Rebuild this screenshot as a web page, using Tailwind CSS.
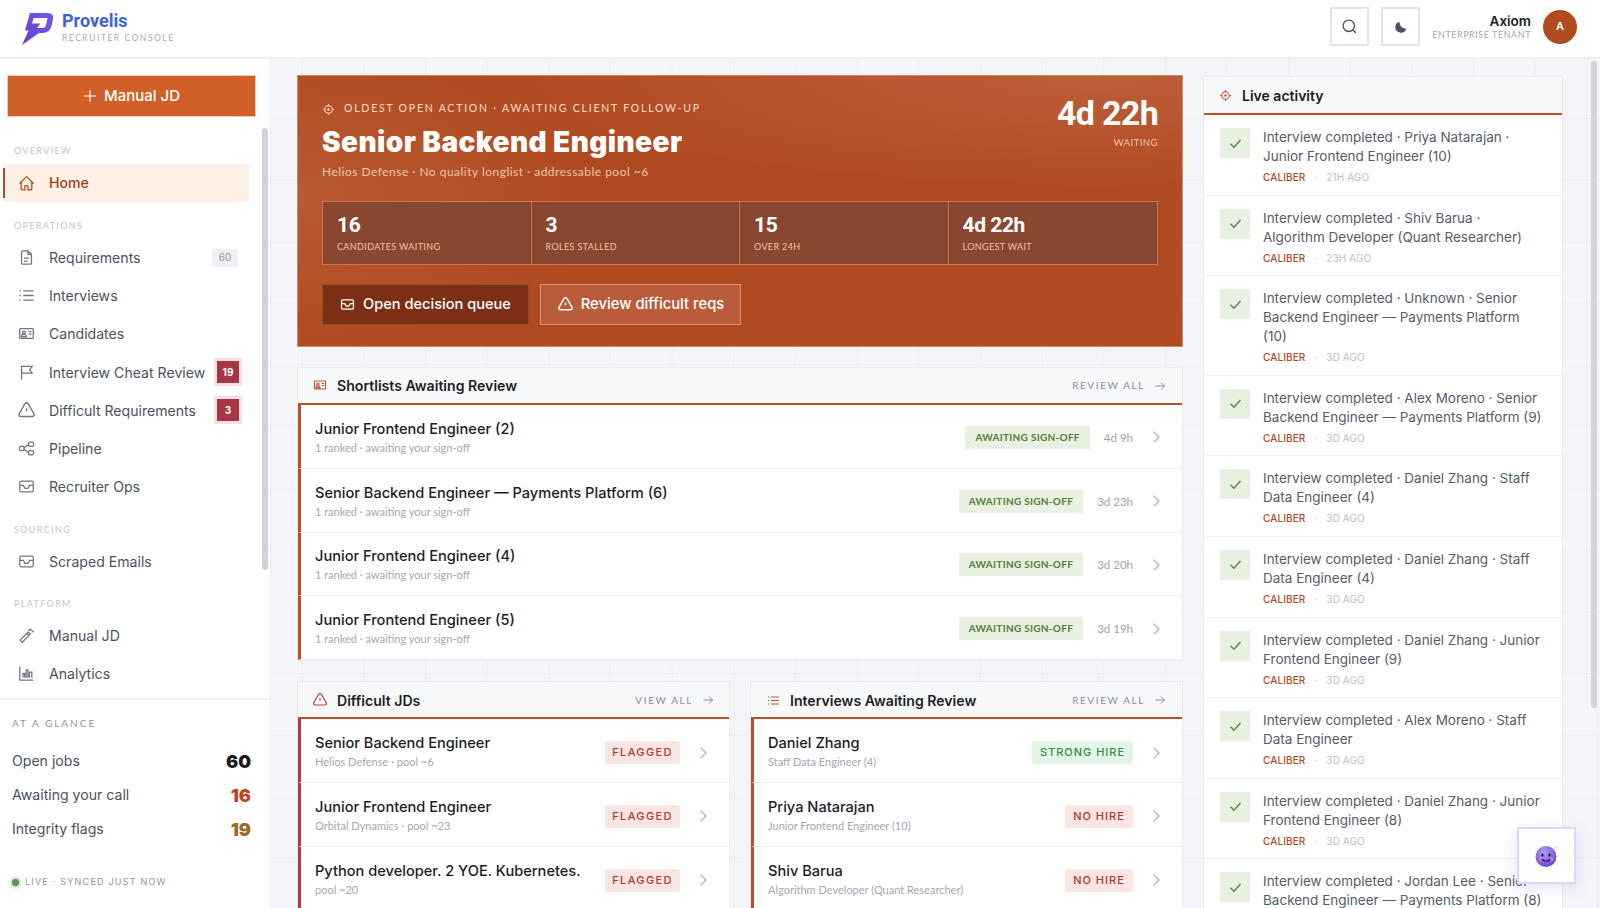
<!DOCTYPE html>
<html lang="en">
<head>
  <meta charset="UTF-8">
  <title>Provelis Recruiter Console</title>
  <script src="https://cdn.jsdelivr.net/npm/@tailwindcss/browser@4"></script>
</head>
<body class="h-[908px] overflow-hidden bg-[#f4f5f8] font-['Inter',sans-serif] text-[#1c1e24]">

  <!-- icon sprite -->
  <svg class="hidden">
    <defs>
      <symbol id="i-home" viewBox="0 0 24 24"><path d="m2.25 12 8.954-8.955c.44-.439 1.152-.439 1.591 0L21.75 12M4.5 9.75v10.125c0 .621.504 1.125 1.125 1.125H9.75v-4.875c0-.621.504-1.125 1.125-1.125h2.25c.621 0 1.125.504 1.125 1.125V21h4.125c.621 0 1.125-.504 1.125-1.125V9.75"/></symbol>
      <symbol id="i-doc" viewBox="0 0 24 24"><path d="M14 2.5H6.5A1.5 1.5 0 0 0 5 4v16a1.5 1.5 0 0 0 1.5 1.5h11A1.5 1.5 0 0 0 19 20V7.5zM14 2.5v5h5M8.5 13h7M8.5 17h5"/></symbol>
      <symbol id="i-list" viewBox="0 0 24 24"><path d="M7.5 5.5h14.500M7.5 12h14.500M7.5 18.5h14.500M2 5.5h2M2 12h2M2 18.5h2"/></symbol>
      <symbol id="i-id" viewBox="0 0 24 24"><path d="M15 9.5h4M15 13h4M3.5 5h17a1 1 0 0 1 1 1v12a1 1 0 0 1-1 1h-17a1 1 0 0 1-1-1V6a1 1 0 0 1 1-1Zm7 5.500a2 2 0 1 1-4 0 2 2 0 0 1 4 0ZM5 16.500a3.500 3.500 0 0 1 7 0Z"/></symbol>
      <symbol id="i-flag" viewBox="0 0 24 24"><path d="M5 22V3.500h15l-3.500 4.500 3.500 5H5"/></symbol>
      <symbol id="i-warn" viewBox="0 0 24 24"><path d="M12 9v4m-9.303 3.126c-.866 1.5.217 3.374 1.948 3.374h14.71c1.73 0 2.813-1.874 1.948-3.374L13.949 3.378c-.866-1.5-3.032-1.5-3.898 0L2.697 16.126ZM12 16.25h.01"/></symbol>
      <symbol id="i-pipe" viewBox="0 0 24 24"><rect x="2" y="9" width="6.500" height="6" rx="1.500"/><rect x="15" y="3" width="7" height="6" rx="1.500"/><rect x="15" y="15" width="7" height="6" rx="1.500"/><path d="M8.500 11 15 6.500M8.500 13l6.500 4.500"/></symbol>
      <symbol id="i-inbox" viewBox="0 0 24 24"><path d="M4.500 4.500h15a2 2 0 0 1 2 2v11a2 2 0 0 1-2 2h-15a2 2 0 0 1-2-2v-11a2 2 0 0 1 2-2ZM2.500 10.500h5l2.500 4h4l2.500-4h5"/></symbol>
      <symbol id="i-wand" viewBox="0 0 24 24"><path d="M3 18.500 14.500 7l3 3L6 21.500ZM12.500 9l3 3M17 2v3.500M14.500 4h5M19.500 7.500 22 5"/></symbol>
      <symbol id="i-chart" viewBox="0 0 24 24"><path d="M2.500 2.500v19h19M7 18v-6h2.500v6M11.500 18V7H14v11M16 18v-8h3.500v8"/></symbol>
      <symbol id="i-target" viewBox="0 0 24 24"><circle cx="12" cy="12" r="7"/><path d="M12 2v3M12 19v3M2 12h3M19 12h3"/><circle cx="12" cy="12" r="1.200" fill="currentColor"/></symbol>
      <symbol id="i-arrow" viewBox="0 0 24 24"><path d="M3 12h18M14 5l7 7-7 7"/></symbol>
      <symbol id="i-chev" viewBox="0 0 24 24"><path d="m8.500 4 8 8-8 8"/></symbol>
      <symbol id="i-check" viewBox="0 0 24 24"><path d="m4 12.500 5.500 5.500L20 6.500"/></symbol>
    </defs>
  </svg>

  <header class="h-[59px] flex items-center justify-between bg-white border-b-2 border-[#eceef2]">
    <div class="flex items-center pl-[22px]">
      <svg class="w-[32px] h-[32px]" viewBox="0 0 32 32">
        <defs><linearGradient id="logo-g" x1="0" y1="1" x2="1" y2="0"><stop offset="0" stop-color="#6a3cd2"/><stop offset="1" stop-color="#7459ea"/></linearGradient></defs>
        <path fill="url(#logo-g)" fill-rule="evenodd" d="M8 0H26Q32 0 31 6L29.500 13Q28 20 20 20H17L0 32 6.500 17.500H3ZM11.500 5H25.500L24 12.500Q23.500 15 20.500 15H15L18.500 10.500H10Z"/>
      </svg>
      <div class="ml-[8px] pb-[3px]">
        <div class="text-[18px] leading-[20px] font-bold text-[#3b63e0] font-['Roboto',sans-serif]">Provelis</div>
        <div class="mt-[1px] text-[8.5px] leading-[12px] tracking-[0.18em] text-[#a3a9b8] font-['Lato',sans-serif]">RECRUITER CONSOLE</div>
      </div>
    </div>
    <div class="flex items-center pr-[23px] pb-[4px]">
      <button class="w-[39px] h-[39px] flex items-center justify-center border-2 border-[#e2e5ec] text-[#4b5262]">
        <svg class="w-[17px] h-[17px]" viewBox="0 0 24 24" fill="none" stroke="currentColor" stroke-width="2"><circle cx="11" cy="11" r="8"/><path d="m21 21-4.300-4.300"/></svg>
      </button>
      <button class="ml-[12px] w-[39px] h-[39px] flex items-center justify-center border-2 border-[#e2e5ec] text-[#4b5262]">
        <svg class="w-[14px] h-[14px]" viewBox="0 0 24 24" fill="currentColor"><path d="M21 14.500A10 10 0 0 1 9.500 3a9.500 9.500 0 1 0 11.500 11.500Z"/></svg>
      </button>
      <div class="ml-[12px] w-[99px] text-right">
        <div class="text-[13.5px] leading-[17px] font-semibold text-[#1c1e24]">Axiom</div>
        <div class="-mt-px text-[9px] leading-[12px] tracking-[0.06em] whitespace-nowrap text-[#a3a9b8] font-['Lato',sans-serif]">ENTERPRISE TENANT</div>
      </div>
      <div class="ml-[12px] w-[34px] h-[34px] rounded-full bg-[#b04a20] flex items-center justify-center text-white text-[11px] font-semibold">A</div>
    </div>
  </header>

  <div class="flex h-[849px]">
    <aside class="relative w-[271px] shrink-0 flex flex-col bg-white border-r border-[#eceef2]">
      <div class="px-[7px] pt-[16px]">
        <button class="w-[249px] h-[42px] flex items-center justify-center gap-[7px] bg-[#d16028] border border-[#f0c9b2] text-white text-[15px] font-medium">
          <svg class="w-[14px] h-[14px]" viewBox="0 0 24 24" fill="none" stroke="currentColor" stroke-width="2"><path d="M12 2v20M2 12h20"/></svg>
          Manual JD
        </button>
      </div>
      <nav id="nav" class="flex-1 pl-[3px] w-[249px]"></nav>
      <div class="h-[210px] border-t-2 border-[#eceef2] pl-[12px] pr-[19px] pt-[16px]">
        <div class="text-[10px] leading-[14px] tracking-[0.2em] text-[#8f94a3] font-['Lato',sans-serif]">AT A GLANCE</div>
        <div class="mt-[14px] flex items-center justify-between h-[34px] text-[14.1px] text-[#4b5262]"><span>Open jobs</span><span class="text-[18px] font-black text-[#17181c]">60</span></div>
        <div class="flex items-center justify-between h-[34px] text-[14.1px] text-[#4b5262]"><span>Awaiting your call</span><span class="text-[18px] font-black text-[#b8471f]">16</span></div>
        <div class="flex items-center justify-between h-[34px] text-[14.1px] text-[#4b5262]"><span>Integrity flags</span><span class="text-[18px] font-black text-[#9a6a1e]">19</span></div>
        <div class="mt-[29px] flex items-center gap-[6px] text-[9px] leading-[14px] tracking-[0.135em] text-[#8f94a3]">
          <span class="w-[7px] h-[7px] rounded-full bg-[#5f9450] shadow-[0_0_4px_#5f9450]"></span>
          LIVE · SYNCED JUST NOW
        </div>
      </div>
      <!-- sidebar scrollbar -->
      <div class="absolute left-[262px] top-[69px] w-[6px] h-[442px] rounded-full bg-[#d1d5db]"></div>
    </aside>

    <main class="relative flex-1 overflow-hidden pl-[26px] pt-[16px] flex gap-[20px] items-start bg-[#f4f5f8] bg-[linear-gradient(#eceef2_1px,transparent_1px),linear-gradient(90deg,#eceef2_1px,transparent_1px)] bg-[size:61.67px_61.67px] bg-[position:30.67px_-2.5px]">
      <div class="w-[886px] shrink-0">
        <section class="h-[272px] px-[24px] pt-[26px] border border-[#cf8a6a] bg-[#b04a20] bg-[radial-gradient(ellipse_70%_45%_at_90%_0%,#bd5e3a_0%,transparent_100%),radial-gradient(ellipse_35%_60%_at_0%_45%,#b95a30_0%,transparent_100%)] text-white">
          <div class="flex justify-between">
            <div>
              <div class="flex items-center h-[14px] text-[10.5px] tracking-[0.17em] text-[#f6dccd] font-['Lato',sans-serif]">
                <svg class="w-[13px] h-[13px] mr-[9px]" fill="none" stroke="currentColor" stroke-width="2"><use href="#i-target"/></svg>
                OLDEST OPEN ACTION · AWAITING CLIENT FOLLOW-UP
              </div>
              <h1 class="mt-[9px] text-[28px] leading-[34px] font-black tracking-[0.015em]">Senior Backend Engineer</h1>
              <p class="mt-[5px] text-[12px] leading-[16px] tracking-[0.04em] text-[#ecc4ae] font-['Lato',sans-serif]">Helios Defense · No quality longlist · addressable pool ~6</p>
            </div>
            <div class="text-right">
              <div class="-mt-[9px] text-[34px] leading-[40px] font-bold tracking-[-0.02em] font-['Roboto',sans-serif]">4d 22h</div>
              <div class="mt-[3px] text-[9.5px] leading-[14px] tracking-[0.05em] text-[#ecc4ae] font-['Lato',sans-serif]">WAITING</div>
            </div>
          </div>
          <div id="stats" class="mt-[21px] h-[64px] grid grid-cols-4 border border-[#c9755a] bg-[#88472e] divide-x divide-[#c9755a]"></div>
          <div class="mt-[19px] flex gap-[11px]">
            <button class="h-[41px] w-[207px] flex items-center justify-center gap-[8px] bg-[#7b2f14] border border-[#8f4c30] text-[14.6px] font-medium">
              <svg class="w-[15px] h-[15px]" fill="none" stroke="currentColor" stroke-width="2"><use href="#i-inbox"/></svg>
              Open decision queue
            </button>
            <button class="h-[41px] w-[201px] flex items-center justify-center gap-[7px] bg-[#b85c3c] border border-[#d69578] text-[14.8px] font-medium">
              <svg class="w-[17px] h-[17px]" fill="none" stroke="currentColor" stroke-width="2"><use href="#i-warn"/></svg>
              Review difficult reqs
            </button>
          </div>
        </section>

        <section class="mt-[20px] bg-white border border-[#e8eaef]">
          <div class="h-[37px] flex items-center justify-between pl-[15px] pr-[16px] bg-[#f7f8fa] border-b-2 border-[#bf4f27]">
            <div class="flex items-center gap-[10px] text-[14.1px] font-semibold"><svg class="w-[14px] h-[14px] text-[#bf4f27]" fill="none" stroke="currentColor" stroke-width="1.800"><use href="#i-id"/></svg>Shortlists Awaiting Review</div>
            <div class="flex items-center gap-[9px] text-[10px] tracking-[0.16em] text-[#8a8f9e] font-['Lato',sans-serif]">REVIEW ALL<svg class="w-[12px] h-[12px]" fill="none" stroke="currentColor" stroke-width="2"><use href="#i-arrow"/></svg></div>
          </div>
          <div id="shortlists"></div>
        </section>

        <div class="mt-[20px] grid grid-cols-2 gap-[20px]">
          <section class="bg-white border border-[#e8eaef]">
            <div class="h-[37px] pt-px flex items-center justify-between pl-[14px] pr-[15px] bg-[#f7f8fa] border-b-2 border-[#bf4f27]">
              <div class="flex items-center gap-[9px] text-[14.1px] font-semibold"><svg class="w-[16px] h-[16px] text-[#b03a48]" fill="none" stroke="currentColor" stroke-width="1.800"><use href="#i-warn"/></svg>Difficult JDs</div>
              <div class="flex items-center gap-[9px] text-[10px] tracking-[0.16em] text-[#8a8f9e] font-['Lato',sans-serif]">VIEW ALL<svg class="w-[12px] h-[12px]" fill="none" stroke="currentColor" stroke-width="2"><use href="#i-arrow"/></svg></div>
            </div>
            <div id="difficult"></div>
          </section>
          <section class="bg-white border border-[#e8eaef]">
            <div class="h-[37px] pt-px flex items-center justify-between px-[16px] bg-[#f7f8fa] border-b-2 border-[#bf4f27]">
              <div class="flex items-center gap-[10px] text-[14.1px] font-semibold"><svg class="w-[13px] h-[13px] text-[#bf4f27]" fill="none" stroke="currentColor" stroke-width="2"><use href="#i-list"/></svg>Interviews Awaiting Review</div>
              <div class="flex items-center gap-[9px] text-[10px] tracking-[0.16em] text-[#8a8f9e] font-['Lato',sans-serif]">REVIEW ALL<svg class="w-[12px] h-[12px]" fill="none" stroke="currentColor" stroke-width="2"><use href="#i-arrow"/></svg></div>
            </div>
            <div id="interviews"></div>
          </section>
        </div>
      </div>

      <section class="mt-px w-[360px] shrink-0 bg-white border border-[#e8eaef]">
        <div class="h-[36px] flex items-center gap-[10px] px-[15px] bg-[#f7f8fa] border-b-2 border-[#bf4f27] text-[14px] font-semibold box-content">
          <svg class="w-[13px] h-[13px] text-[#bf4f27]" fill="none" stroke="currentColor" stroke-width="2"><use href="#i-target"/></svg>Live activity
        </div>
        <div id="activity"></div>
      </section>

      <!-- main scrollbar -->
      <div class="absolute right-[3px] top-[2px] w-[6px] h-[647px] rounded-full bg-[#d1d5db]"></div>
    </main>
  </div>

  <!-- assistant launcher -->
  <button class="fixed left-[1517px] top-[827px] w-[59px] h-[57px] flex items-center justify-center bg-white border-2 border-[#dcd8fb] shadow-[0_4px_16px_rgba(90,70,200,0.15)]">
    <svg class="w-[30px] h-[30px]" viewBox="0 0 30 30">
      <defs><radialGradient id="face-g" cx="0.4" cy="0.3" r="0.8"><stop offset="0" stop-color="#b29cf5"/><stop offset="1" stop-color="#5f3fc4"/></radialGradient></defs>
      <circle cx="14" cy="15.500" r="10.500" fill="url(#face-g)"/>
      <circle cx="9" cy="18" r="2" fill="#d58fd8" opacity="0.7"/><circle cx="19.500" cy="18" r="2" fill="#d58fd8" opacity="0.7"/>
      <ellipse cx="10.500" cy="14" rx="1.100" ry="1.600" fill="#21124f"/><ellipse cx="17.500" cy="14" rx="1.100" ry="1.600" fill="#21124f"/>
      <path d="M10 18.500q4 3.500 8 0" fill="none" stroke="#21124f" stroke-width="1.200" stroke-linecap="round"/>
      <circle cx="24.500" cy="6.500" r="1.300" fill="#cfe0ff"/>
    </svg>
  </button>

  <script>
    const icon = (name, cls) => `<svg class="${cls}" fill="none" stroke="currentColor" stroke-width="1.800"><use href="#i-${name}"/></svg>`;

    // sidebar nav
    const navLabel = (t, cls) => `<div class="ml-[11px] ${cls} h-[14px] text-[9px] leading-[14px] tracking-[0.15em] text-[#c0c4ce] font-['Lato',sans-serif]">${t}</div>`;
    const navRow = (ic, t, extra = '', iconCls = 'w-[17px] h-[17px] mr-[14px]') => `<a class="h-[38.2px] flex items-center pl-[15px] pr-[10px] text-[14.1px] text-[#4b5262]">${icon(ic, iconCls + ' shrink-0 text-[#6f7686]')}<span class="flex-1 whitespace-nowrap">${t}</span>${extra}</a>`;
    const redBadge = t => `<span class="w-[22px] h-[22px] flex items-center justify-center bg-[#a63644] ring-3 ring-[#f6e0e3] text-white text-[10px] font-bold">${t}</span>`;
    document.getElementById('nav').innerHTML =
      navLabel('OVERVIEW', 'mt-[27px] mb-[6px]') +
      `<a class="relative h-[38px] flex items-center pl-[15px] bg-[#fdf0e7] text-[14.1px] font-medium text-[#a03f1c]"><span class="absolute left-0 top-[4px] bottom-[4px] w-[2px] bg-[#b04a20]"></span>${icon('home', 'w-[17px] h-[17px] mr-[14px] text-[#b04a20]')}Home</a>` +
      navLabel('OPERATIONS', 'mt-[17px] mb-[5.5px]') +
      navRow('doc', 'Requirements', `<span class="w-[26px] h-[18px] mr-px flex items-center justify-center bg-[#eef0f4] text-[#8f94a3] text-[10px]">60</span>`) +
      navRow('list', 'Interviews') +
      navRow('id', 'Candidates') +
      navRow('flag', 'Interview Cheat Review', redBadge('19')) +
      navRow('warn', 'Difficult Requirements', redBadge('3'), 'w-[19px] h-[19px] -ml-px mr-[13px]') +
      navRow('pipe', 'Pipeline') +
      navRow('inbox', 'Recruiter Ops') +
      navLabel('SOURCING', 'mt-[17.5px] mb-[5px]') +
      navRow('inbox', 'Scraped Emails') +
      navLabel('PLATFORM', 'mt-[16px] mb-[6px]') +
      navRow('wand', 'Manual JD') +
      navRow('chart', 'Analytics');

    // hero stats
    const stats = [['16', 'CANDIDATES WAITING'], ['3', 'ROLES STALLED'], ['15', 'OVER 24H'], ['4d 22h', 'LONGEST WAIT']];
    document.getElementById('stats').innerHTML = stats.map(s => `
      <div class="pl-[14px] pt-[11px]">
        <div class="text-[21px] leading-[24px] font-bold tracking-[-0.02em] font-['Roboto',sans-serif]">${s[0]}</div>
        <div class="mt-[3px] text-[9px] leading-[14px] tracking-[0.04em] text-[#ecc4ae] font-['Lato',sans-serif]">${s[1]}</div>
      </div>`).join('');

    // list rows; bottom cards sit their pill and chevron a pixel lower
    const row = (bar, title, sub, pill, time, chevCls = '') => `
      <div class="h-[63.8px] pt-[2px] flex items-center pr-[18px] border-l-3 ${bar} border-b border-b-[#eef0f3]">
        <div class="flex-1 pl-[14px] min-w-0">
          <div class="text-[14.6px] leading-[20px] font-medium whitespace-nowrap">${title}</div>
          <div class="mt-[1px] text-[11px] leading-[16px] text-[#a3a8b5] whitespace-nowrap font-['Lato',sans-serif]">${sub}</div>
        </div>
        ${pill}
        ${time ? `<span class="ml-[14px] text-[11.5px] tabular-nums text-[#9ea3b0] font-['Lato',sans-serif]">${time}</span>` : ''}
        ${icon('chev', 'w-[16px] h-[16px] ml-[15px] text-[#a9aebb] ' + chevCls)}
      </div>`;
    const signOff = `<span class="h-[23px] px-[10px] flex items-center bg-[#e8f0e2] text-[#4f7f3a] text-[10px] font-bold tracking-[0.03em] font-['Lato',sans-serif]">AWAITING SIGN-OFF</span>`;
    const flagged = `<span class="mt-[2px] w-[75px] h-[23px] flex items-center justify-center rounded-[3px] bg-[#fbe5e3] text-[#b3342f] text-[11px] font-medium tracking-[0.12em]">FLAGGED</span>`;
    const strong = `<span class="mt-[2px] w-[101px] h-[23px] flex items-center justify-center rounded-[3px] bg-[#e3f6e6] text-[#3b8552] text-[11px] font-medium tracking-[0.09em]">STRONG HIRE</span>`;
    const noHire = `<span class="mt-[2px] w-[68px] h-[23px] flex items-center justify-center rounded-[3px] bg-[#fbe5e3] text-[#b3342f] text-[11px] font-medium tracking-[0.09em]">NO HIRE</span>`;

    document.getElementById('shortlists').innerHTML = [
      ['Junior Frontend Engineer (2)', '4d 9h'],
      ['Senior Backend Engineer — Payments Platform (6)', '3d 23h'],
      ['Junior Frontend Engineer (4)', '3d 20h'],
      ['Junior Frontend Engineer (5)', '3d 19h'],
    ].map(r => row('border-l-[#bf4f27]', r[0], '1 ranked · awaiting your sign-off', signOff, r[1])).join('');

    document.getElementById('difficult').innerHTML = [
      ['Senior Backend Engineer', 'Helios Defense · pool ~6'],
      ['Junior Frontend Engineer', 'Orbital Dynamics · pool ~23'],
      ['Python developer. 2 YOE. Kubernetes.', 'pool ~20'],
    ].map(r => row('border-l-[#b03a48]', r[0], r[1], flagged, '', 'mt-[2px]')).join('');

    document.getElementById('interviews').innerHTML = [
      ['Daniel Zhang', 'Staff Data Engineer (4)', strong],
      ['Priya Natarajan', 'Junior Frontend Engineer (10)', noHire],
      ['Shiv Barua', 'Algorithm Developer (Quant Researcher)', noHire],
    ].map(r => row('border-l-[#bf4f27]', r[0], r[1], r[2], '', 'mt-[2px]')).join('');

    // activity feed
    const feed = [
      ['Priya Natarajan · Junior Frontend Engineer (10)', '21H AGO'],
      ['Shiv Barua · Algorithm Developer (Quant Researcher)', '23H AGO'],
      ['Unknown · Senior Backend Engineer — Payments Platform (10)', '3D AGO'],
      ['Alex Moreno · Senior Backend Engineer — Payments Platform (9)', '3D AGO'],
      ['Daniel Zhang · Staff Data Engineer (4)', '3D AGO'],
      ['Daniel Zhang · Staff Data Engineer (4)', '3D AGO'],
      ['Daniel Zhang · Junior Frontend Engineer (9)', '3D AGO'],
      ['Alex Moreno · Staff Data Engineer', '3D AGO'],
      ['Daniel Zhang · Junior Frontend Engineer (8)', '3D AGO'],
      ['Jordan Lee · Senior Backend Engineer — Payments Platform (8)', '3D AGO'],
    ];
    document.getElementById('activity').innerHTML = feed.map(f => `
      <div class="flex pl-[16px] pr-[19px] pt-[13px] pb-[9.6px] border-b border-[#eef0f3]">
        <span class="w-[30px] h-[30px] shrink-0 flex items-center justify-center bg-[#e8f0e2] text-[#4f8a3d]"><svg class="w-[15px] h-[15px]" fill="none" stroke="currentColor" stroke-width="2.200"><use href="#i-check"/></svg></span>
        <div class="ml-[13px] min-w-0">
          <div class="text-[13.5px] leading-[19px] text-[#565c6b]">Interview completed · ${f[0]}</div>
          <div class="mt-[3px] flex items-center text-[10px] leading-[16px] tracking-[0.01em]"><span class="font-medium text-[#b04a20]">CALIBER</span><span class="mx-[9px] text-[#c9cdd6]">·</span><span class="text-[#b9bec9]">${f[1]}</span></div>
        </div>
      </div>`).join('');
  </script>
</body>
</html>
